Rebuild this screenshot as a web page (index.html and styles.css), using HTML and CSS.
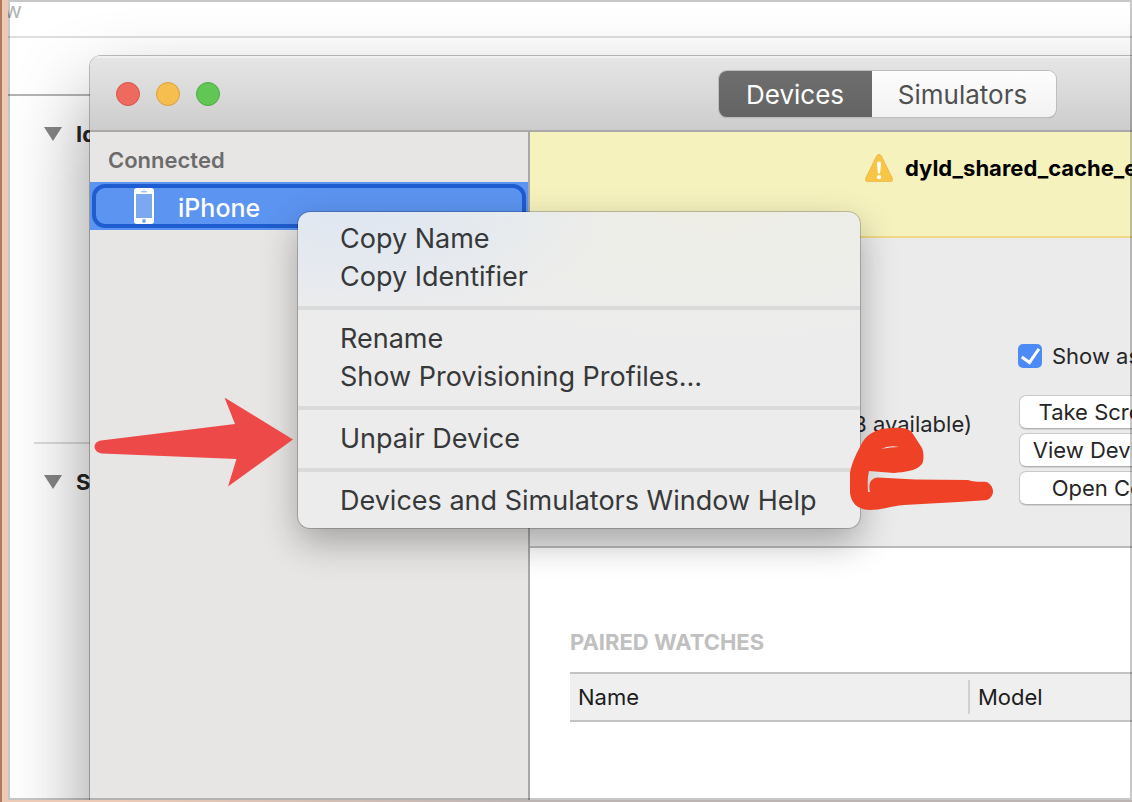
FILE: index.html
```html
<!DOCTYPE html>
<html lang="en">
<head>
<meta charset="utf-8">
<title>Devices and Simulators</title>
<link rel="stylesheet" href="styles.css">
</head>
<body>
<div class="screen">
  <main class="project">
    <div class="crumbs"><span class="crumb">w</span></div>
    <div class="tabs"><span>Capabilities</span></div>
    <section class="group">
      <h2 class="group-title"><span class="triangle"></span>Identity</h2>
    </section>
    <section class="group">
      <h2 class="group-title"><span class="triangle"></span>Signing</h2>
    </section>
  </main>

  <div class="window">
    <header class="titlebar">
      <div class="lights">
        <button class="light red" aria-label="Close"></button>
        <button class="light amber" aria-label="Minimize"></button>
        <button class="light green" aria-label="Zoom"></button>
      </div>
      <div class="segmented">
        <button class="segment active">Devices</button>
        <button class="segment">Simulators</button>
      </div>
    </header>
    <div class="panes">
      <aside class="sidebar">
        <h3 class="sidebar-title">Connected</h3>
        <button class="device">
          <svg width="20" height="36" viewBox="0 0 20 36" aria-hidden="true">
            <rect width="20" height="36" rx="3" fill="#fff"/>
            <rect x="2" y="6" width="16" height="24" fill="#7ca8f2"/>
            <path d="M7 3.800h6M9.500 2h1" stroke="#7ca8f2" stroke-width="1"/>
            <circle cx="10" cy="33" r="2" fill="#7ca8f2"/>
          </svg>
          <span>iPhone</span>
        </button>
      </aside>
      <div class="detail">
        <div class="banner">
          <svg width="28" height="28" viewBox="0 0 28 28" aria-hidden="true">
            <path d="M11.800 1.700Q14-1.200 16.200 1.700L27.200 24Q28.400 27.600 25 27.600H3Q-.4 27.600.8 24Z" fill="#f8c544" stroke="#f0b04a" stroke-width=".8"/>
            <path d="M12 9.500a2 2 0 0 1 4 0L15.200 18.500a1.200 1.200 0 0 1-2.400 0Z" fill="#fff"/>
            <circle cx="14" cy="23.200" r="2.100" fill="#fff"/>
          </svg>
          <strong>dyld_shared_cache_extract_dylibs failed</strong>
        </div>
        <div class="info">
          <p class="capacity">B available)</p>
          <div class="controls">
            <label class="check">
              <input type="checkbox" checked>
              <span>Show as run destination</span>
            </label>
            <button class="push">Take Screenshot</button>
            <button class="push">View Device Logs</button>
            <button class="push">Open Console</button>
          </div>
        </div>
        <div class="watches">
          <h3 class="watches-title">PAIRED WATCHES</h3>
          <table class="table">
            <thead>
              <tr><th class="name-col">Name</th><th><span class="divided">Model</span></th></tr>
            </thead>
          </table>
        </div>
      </div>
    </div>
  </div>

  <div class="menu" role="menu">
    <button class="item" role="menuitem">Copy Name</button>
    <button class="item" role="menuitem">Copy Identifier</button>
    <hr class="rule">
    <button class="item" role="menuitem">Rename</button>
    <button class="item" role="menuitem">Show Provisioning Profiles…</button>
    <hr class="rule">
    <button class="item" role="menuitem">Unpair Device</button>
    <hr class="rule">
    <button class="item" role="menuitem">Devices and Simulators Window Help</button>
  </div>

  <svg class="arrow" width="200" height="90" viewBox="0 0 200 90" aria-hidden="true">
    <path d="M7 42.500L141 26 130.500 -.5 199 41.500 134 88.500 142.500 61 8 55.500C-1.500 54-2 44 7 42.500Z" fill="#ee4949"/>
  </svg>
  <svg class="scribble" width="144" height="84" viewBox="0 0 144 84" aria-hidden="true">
    <path d="M0 46C2 34 8 24 12 16C18 5 30 1 43 1C54 0 60 2 63 7L72 21C74 26 74 33 72 37C67 44 54 45 44 46L19 44C17.500 50 17.500 57 18 65H20C18 56 21 51 28 50.500L65 52.500 118 53C125 55.500 130 54.500 137 55C145 60 145 69 137 73C130 74 118 74 108 75L54 78C41 79 31 83 20 83C7 83 1 75 0 66Z" fill="#ee4125"/>
    <path d="M31 22Q39 18 49 20Q40 20 31 22Z" fill="#ebebeb"/>
  </svg>
</div>
</body>
</html>
```
FILE: styles.css
```css
* { box-sizing: border-box; }

body {
  margin: 0;
  height: 100vh;
  overflow: hidden;
  padding: 0 0 2px 8px;
  background: linear-gradient(90deg, #b17a5e 2px, #eccab6 2px, #eccab6 120px, #bcb4b3 530px);
  font-family: Inter, "Liberation Sans", sans-serif;
  font-size: 22px;
  line-height: 28px;
  color: #262626;
}

button {
  margin: 0;
  padding: 0;
  border: 0;
  background: none;
  font: inherit;
  color: inherit;
}

h2, h3, p { margin: 0; font-size: inherit; }

.screen {
  position: relative;
  height: 100%;
  overflow: hidden;
  background: #fff;
}

.screen::after {
  content: "";
  position: absolute;
  inset: 0;
  border: 2px solid rgba(0, 0, 0, .22);
  pointer-events: none;
}

.crumbs {
  height: 38px;
  padding-top: 2px;
  line-height: 16px;
  border-bottom: 2px solid #dedede;
  color: #b4b4b4;
}

/* Scrolled partly out of view on the left. */
.crumb { margin-left: -4px; }

.tabs {
  height: 58px;
  padding: 14px 0 0 594px;
  border-bottom: 2px solid #b4b4b4;
}

.group {
  height: 346px;
  margin-left: 26px;
  padding: 24px 0 0 10px;
}

.group + .group { border-top: 2px solid #dcdcdc; }

.group-title {
  display: flex;
  align-items: center;
  gap: 14px;
  font-weight: 700;
}

.triangle {
  width: 18px;
  height: 14px;
  background: #858585;
  clip-path: polygon(0 0, 100% 0, 50% 100%);
}

/* The window runs past the right and bottom edges of the screen. */
.window {
  position: absolute;
  left: 82px;
  top: 56px;
  right: -552px;
  bottom: -80px;
  display: flex;
  flex-direction: column;
  overflow: hidden;
  border-radius: 11px;
  background: #fff;
}

.project::after {
  content: "";
  position: absolute;
  left: 82px;
  top: 56px;
  right: -552px;
  bottom: -80px;
  border-radius: 11px;
  box-shadow: 0 0 0 1px rgba(0, 0, 0, .25), 0 40px 80px rgba(0, 0, 0, .42);
}

.titlebar {
  display: grid;
  grid-template-columns: 1fr auto 1fr;
  align-items: center;
  height: 76px;
  padding: 2px 26px 0;
  background: linear-gradient(#e6e6e6, #cdcdcd);
  border-bottom: 2px solid #a9a9a9;
  box-shadow: inset 0 2px #f0f0f0;
}

.lights { display: flex; gap: 16px; }

.light {
  width: 24px;
  height: 24px;
  border-radius: 50%;
  border: 1px solid;
}

.red { background: #ee6a5f; border-color: #d9534a; }
.amber { background: #f5be4f; border-color: #dca03c; }
.green { background: #61c655; border-color: #4dab42; }

.segmented {
  display: flex;
  height: 46px;
  border-radius: 8px;
  overflow: hidden;
  font-size: 26px;
  box-shadow: 0 0 0 1px #bdbdbd, 0 1px 1px #8e8e8e;
}

.segment {
  width: 184px;
  padding: 2px 2px 0 0;
  background: linear-gradient(#fdfdfd, #f2f2f2);
  color: #505050;
}

.active {
  width: 153px;
  padding-right: 0;
  background: linear-gradient(#6e6e6e, #646464);
  color: #fff;
}

.panes { flex: 1; display: flex; }

.sidebar {
  width: 440px;
  flex: none;
  background: #e8e6e5;
  border-right: 2px solid #a9a8a8;
}

.sidebar-title {
  padding: 14px 18px 8px;
  font-weight: 600;
  color: #6d6c6c;
}

.device {
  display: flex;
  align-items: center;
  gap: 24px;
  position: relative;
  width: 100%;
  height: 48px;
  padding: 0 44px;
  background: #5c94f1;
  color: #fff;
  font-size: 25px;
  font-weight: 500;
}

.device span { padding-top: 4px; }

.device::after {
  content: "";
  position: absolute;
  inset: 2px;
  border: 4px solid #1e5ccf;
  border-radius: 13px;
}

.detail {
  flex: 1;
  display: flex;
  flex-direction: column;
}

.banner {
  display: flex;
  align-items: flex-start;
  gap: 12px;
  height: 106px;
  padding: 22px 0 0 335px;
  background: #f5f2be;
  border-bottom: 2px solid #f0d888;
  color: #000;
  white-space: nowrap;
}

.info {
  display: flex;
  gap: 46px;
  height: 310px;
  padding-top: 104px;
  background: #ebebeb;
  border-bottom: 2px solid #bababa;
}

.capacity {
  width: 442px;
  padding-top: 68px;
  text-align: right;
}

.controls {
  display: flex;
  flex-direction: column;
  gap: 4px;
  width: 214px;
}

.check {
  display: flex;
  align-items: center;
  gap: 10px;
  height: 28px;
  margin-bottom: 21px;
  white-space: nowrap;
}

.check input {
  appearance: none;
  flex: none;
  width: 24px;
  height: 24px;
  margin: 0;
  border-radius: 5px;
  background: #4c8af5;
  display: grid;
  place-items: center;
}

.check input::after {
  content: "";
  width: 8px;
  height: 15px;
  margin-bottom: 4px;
  border: solid #fff;
  border-width: 0 3px 3px 0;
  transform: rotate(35deg);
}

.push {
  height: 34px;
  margin-left: 1px;
  border: 1px solid #c9c9c9;
  border-bottom-color: #b0b0b0;
  border-radius: 7px;
  background: #fff;
  box-shadow: 0 1px 1px rgba(0, 0, 0, .1);
  white-space: nowrap;
}

.watches { padding: 80px 0 0 40px; }

.watches-title {
  padding-bottom: 16px;
  font-weight: 700;
  color: #c0c0c0;
}

.table {
  width: 100%;
  border-collapse: collapse;
  background: #efefef;
}

.table th {
  height: 48px;
  padding: 0 0 0 8px;
  border: solid #c3c3c3;
  border-width: 2px 0;
  text-align: left;
  font-weight: 400;
  line-height: 26px;
  color: #1c1c1c;
}

.table th + th { padding: 0; }

.name-col { width: 398px; }

.divided {
  display: block;
  padding: 4px 8px;
  border-left: 2px solid #d0d0d0;
}

.menu {
  position: absolute;
  left: 290px;
  top: 212px;
  width: 562px;
  padding: 8px 0;
  border-radius: 12px;
  background:
    radial-gradient(ellipse 260px 110px at 60px 0, #dfe7f2, rgba(223, 231, 242, 0)),
    radial-gradient(ellipse 340px 130px at 420px 0, #eeeee6, rgba(238, 238, 230, 0)),
    #ececec;
  box-shadow: 0 0 0 1px rgba(0, 0, 0, .2), 0 14px 36px rgba(0, 0, 0, .3);
  font-size: 27px;
  color: #363839;
}

.item {
  display: block;
  width: 100%;
  height: 38px;
  padding: 0 42px;
  text-align: left;
  white-space: nowrap;
}

.rule {
  height: 4px;
  margin: 10px 0;
  border: 0;
  background: #dadada;
}

.arrow {
  position: absolute;
  left: 86px;
  top: 398px;
}

.scribble {
  position: absolute;
  left: 842px;
  top: 427px;
}
```
